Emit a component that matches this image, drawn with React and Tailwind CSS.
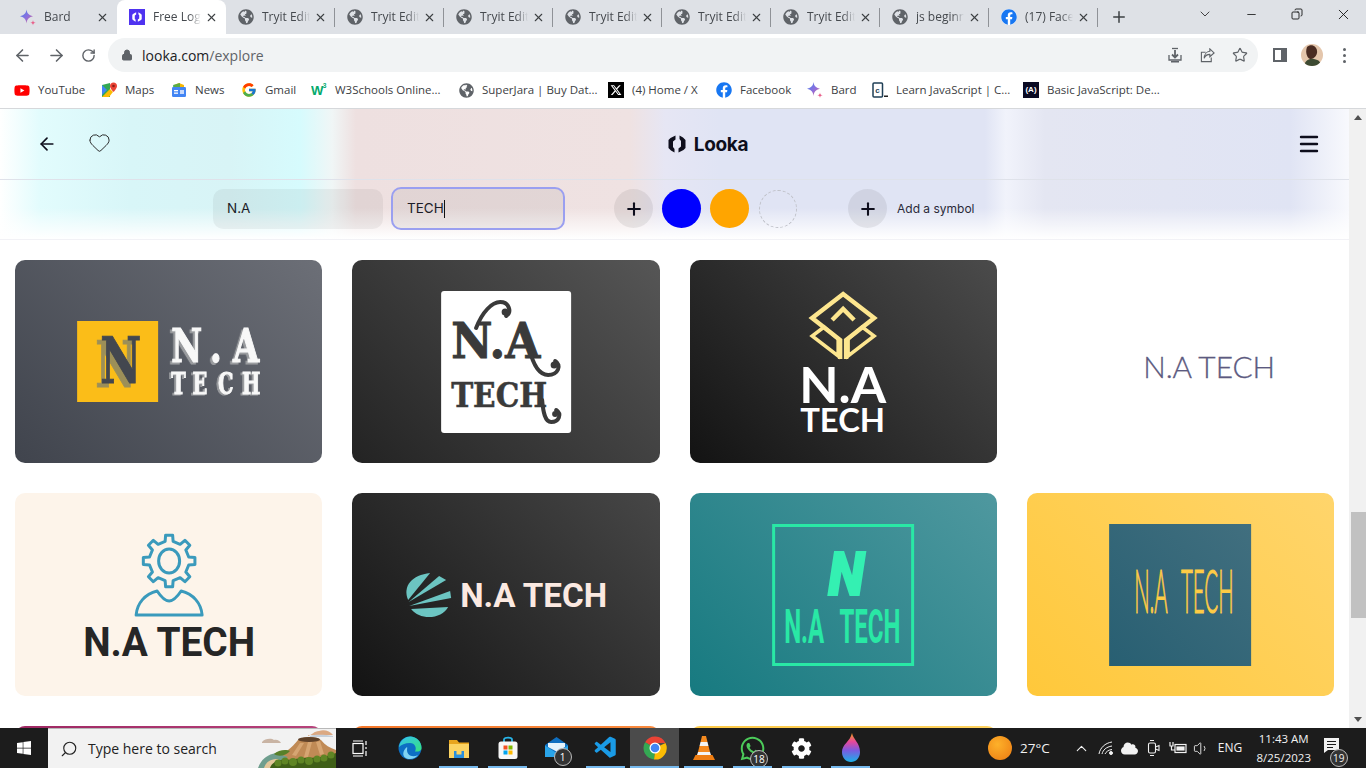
import React from 'react';
import { FaGlobeAmericas, FaFacebook, FaYoutube, FaWindows, FaWhatsapp, FaCog, FaCloud } from 'react-icons/fa';
import { FcGoogle } from 'react-icons/fc';
import { FaXTwitter } from 'react-icons/fa6';
import { VscVscode } from 'react-icons/vsc';
import {
  ArrowLeft, ArrowRight, RotateCw, Lock, Star, Heart, Menu, Plus, X, ChevronDown,
  Minus, Copy, ChevronUp, Search, Volume1,
} from 'lucide-react';

// Iconos de pestañas y marcadores
const BardIcon = ({ size = 17, id = 'bardGrad' }) => (
  <svg width={size} height={size} viewBox="0 0 16 16">
    <defs>
      <linearGradient id={id} x1="0" y1="0" x2="1" y2="1">
        <stop offset="0" stopColor="#3f83f0" />
        <stop offset="0.55" stopColor="#8f6fdc" />
        <stop offset="1" stopColor="#e0607a" />
      </linearGradient>
    </defs>
    <path d="M6.500 0C7 3.800 8.500 5.500 13 6.800C8.500 8 7 9.800 6.500 14C6 9.800 4.500 8 0 6.800C4.500 5.500 6 3.800 6.500 0Z" fill={`url(#${id})`} />
    <path d="M13 10.500C13.200 12.300 13.900 13 15.800 13.300C13.900 13.600 13.200 14.300 13 16C12.800 14.300 12.100 13.600 10.200 13.300C12.100 13 12.800 12.300 13 10.500Z" fill="#e8608a" />
  </svg>
);

const LookaFavicon = () => (
  <div className="w-4 h-4 bg-[#4f33f0] flex items-center justify-center">
    <svg width="10" height="10" viewBox="0 0 18 18" fill="#fff">
      <path d="M7.500 0.500 L2.500 3 L0.500 5 V13 L3 15.500 L6.500 17.500 V14 L5 12 V6.500 L7.500 4.500Z" />
      <path d="M10.500 17.500 L15.500 15 L17.500 13 V5 L15 2.500 L11.500 0.500 V4 L13 6 V11.500 L10.500 13.500Z" />
    </svg>
  </div>
);

const Globe = ({ size = 16 }) => <FaGlobeAmericas size={size} className="text-[#5f6368]" />;

const Fb = ({ size = 16 }) => (
  <span className="inline-flex rounded-full bg-white">
    <FaFacebook size={size} className="text-[#1877f2]" />
  </span>
);

const MapsIcon = () => (
  <svg width="16" height="16" viewBox="0 0 16 16">
    <path d="M1 3 L9 1 V15 L1 15Z" fill="#34a853" />
    <path d="M1 15 L9 7 L12 10 L8 15Z" fill="#fbbc04" />
    <path d="M1 3 L6 8 L1 13Z" fill="#4285f4" />
    <path d="M12.500 0.500C10.500 0.500 9 2 9 4C9 6.500 12.500 10 12.500 10C12.500 10 16 6.500 16 4C16 2 14.500 0.500 12.500 0.500Z" fill="#ea4335" />
    <circle cx="12.500" cy="4" r="1.300" fill="#8c1d18" />
  </svg>
);

const NewsIcon = () => (
  <svg width="16" height="16" viewBox="0 0 16 16">
    <path d="M3 3 L8 1 L13 3 V6 H3Z" fill="#f6b704" />
    <path d="M2 3 L9 1 V5 H2Z" fill="#34a853" opacity="0.8" />
    <rect x="1" y="5" width="14" height="10" rx="1.200" fill="#4285f4" />
    <rect x="3" y="8" width="4" height="1.300" fill="#fff" />
    <rect x="3" y="10.500" width="4" height="1.300" fill="#fff" />
    <rect x="9" y="8" width="4" height="4" fill="#c5d8fb" />
  </svg>
);

const W3Icon = () => (
  <svg width="17" height="16" viewBox="0 0 17 16">
    <text x="0" y="13" fontSize="14" fontWeight="900" fill="#04aa6d" className="font-['Liberation_Sans']">W</text>
    <text x="12.500" y="6" fontSize="7" fontWeight="700" fill="#04aa6d" className="font-['Liberation_Sans']">3</text>
  </svg>
);

const CodecademyIcon = () => (
  <svg width="16" height="16" viewBox="0 0 16 16">
    <rect x="1" y="1" width="9.500" height="14" rx="1" fill="none" stroke="#1f3f56" strokeWidth="1.500" />
    <text x="3.200" y="11" fontSize="8" fontWeight="700" fill="#1f3f56" className="font-['Liberation_Sans']">c</text>
    <rect x="12" y="13.500" width="4" height="1.500" fill="#222" />
  </svg>
);

const FccIcon = () => (
  <div className="w-4 h-4 bg-[#0a0a23] flex items-center justify-center text-white text-[8px] font-bold font-['Liberation_Sans'] leading-none">(A)</div>
);

const tabs = [
  { icon: <BardIcon />, title: 'Bard', sep: false },
  { icon: <LookaFavicon />, title: 'Free Logo Maker', active: true, sep: false },
  { icon: <Globe />, title: 'Tryit Editor', sep: true },
  { icon: <Globe />, title: 'Tryit Editor', sep: true },
  { icon: <Globe />, title: 'Tryit Editor', sep: true },
  { icon: <Globe />, title: 'Tryit Editor', sep: true },
  { icon: <Globe />, title: 'Tryit Editor', sep: true },
  { icon: <Globe />, title: 'Tryit Editor', sep: true },
  { icon: <Globe />, title: 'js beginner', sep: true },
  { icon: <Fb />, title: '(17) Facebook', sep: true },
];

const bookmarks = [
  { icon: <FaYoutube size={17} className="text-[#f00]" />, label: 'YouTube', width: 'w-[87px]' },
  { icon: <MapsIcon />, label: 'Maps', width: 'w-[70px]' },
  { icon: <NewsIcon />, label: 'News', width: 'w-[70px]' },
  { icon: <FcGoogle size={16} />, label: 'Gmail', width: 'w-[70px]' },
  { icon: <W3Icon />, label: 'W3Schools Online...', width: 'w-[147px]' },
  { icon: <Globe size={15} />, label: 'SuperJara | Buy Dat...', width: 'w-[150px]' },
  { icon: <div className="w-4 h-4 bg-black flex items-center justify-center"><FaXTwitter size={12} className="text-white" /></div>, label: '(4) Home / X', width: 'w-[108px]' },
  { icon: <Fb />, label: 'Facebook', width: 'w-[91px]' },
  { icon: <BardIcon size={16} id="bardGradBookmark" />, label: 'Bard', width: 'w-[65px]' },
  { icon: <CodecademyIcon />, label: 'Learn JavaScript | C...', width: 'w-[151px]' },
  { icon: <FccIcon />, label: 'Basic JavaScript: De...', width: 'w-[150px]' },
];

function gearPath(cx, cy, outer, inner, teeth) {
  const pts = [];
  const step = (Math.PI * 2) / teeth;
  for (let i = 0; i < teeth; i++) {
    const a = i * step - Math.PI / 2;
    const w = step * 0.17;
    const at = (r, ang) => `${(cx + r * Math.cos(ang)).toFixed(1)} ${(cy + r * Math.sin(ang)).toFixed(1)}`;
    pts.push(at(inner, a - w * 1.5), at(outer, a - w), at(outer, a + w), at(inner, a + w * 1.5));
  }
  return `M${pts.join(' L')} Z`;
}

// Logos de las tarjetas, en coordenadas de la tarjeta (307x203)
const LogoOne = () => (
  <svg viewBox="0 0 307 203" className="w-full h-full">
    <rect x="62" y="61" width="81" height="81" fill="#fbbd18" />
    <text x="85" y="123" fontSize="64" fontWeight="700" textLength="41" lengthAdjust="spacingAndGlyphs" fill="#43474f" stroke="#43474f" strokeWidth="1" className="font-['DejaVu_Serif'] [filter:drop-shadow(-5px_4px_0_#9c8f58)]">N</text>
    <text transform="translate(156 102) scale(0.72 1)" x="0 54 86" fontSize="47" fontWeight="700" fill="#f8f8f8" stroke="#f8f8f8" strokeWidth="1.200" className="font-['DejaVu_Serif'] [filter:drop-shadow(-3px_2px_0_#9a9c9f)]">N.A</text>
    <text transform="translate(156 134) scale(0.65 1)" x="0 33 72 109" fontSize="30" fontWeight="700" fill="#f8f8f8" stroke="#f8f8f8" strokeWidth="1" className="font-['DejaVu_Serif'] [filter:drop-shadow(-3px_1px_0_#9a9c9f)]">TECH</text>
  </svg>
);

const LogoTwo = () => (
  <svg viewBox="0 0 307 203" className="w-full h-full">
    <rect x="89" y="31" width="130" height="142" rx="3" fill="#fff" />
    <text x="99" y="98" fontSize="48" fontWeight="700" textLength="89" lengthAdjust="spacingAndGlyphs" fill="#3a3a3a" stroke="#3a3a3a" strokeWidth="1" className="font-['DejaVu_Serif']">N.A</text>
    <text x="99" y="147" fontSize="34" fontWeight="700" textLength="96" lengthAdjust="spacingAndGlyphs" fill="#3a3a3a" stroke="#3a3a3a" strokeWidth="0.600" className="font-['DejaVu_Serif']">TECH</text>
    <g fill="none" stroke="#3a3a3a" strokeWidth="4" strokeLinecap="round">
      <path d="M124 68C130 52 140 42 148 42C157 42 160 52 154 56" />
      <path d="M177 88C181 105 187 115 196 115C206 115 210 105 203 101" />
      <path d="M190 140C191 152 193 162 199 162C207 162 210 154 204 150" />
    </g>
    <circle cx="153" cy="52" r="3.500" fill="#3a3a3a" />
    <circle cx="202" cy="105" r="3.500" fill="#3a3a3a" />
    <circle cx="203" cy="154" r="3" fill="#3a3a3a" />
  </svg>
);

const LogoThree = () => (
  <svg viewBox="0 0 307 203" className="w-full h-full">
    <g fill="none" stroke="#fde68f" strokeWidth="4.500" strokeLinejoin="miter">
      <path d="M150 99 V80 L122 58 L153 34 L184 58 L156 80 V99" />
      <path d="M142 60 L153 49 L164 60" strokeWidth="4.500" />
      <path d="M134 67 L122 76 L148 96 V79 Z" strokeWidth="3.500" />
      <path d="M172 67 L184 76 L158 96 V79 Z" strokeWidth="3.500" />
    </g>
    <text x="109" y="143" fontSize="50" fontWeight="700" textLength="87" lengthAdjust="spacingAndGlyphs" fill="#fff" className="font-['Lato']">N.A</text>
    <text x="110" y="172" fontSize="32" fontWeight="700" textLength="85" lengthAdjust="spacingAndGlyphs" fill="#fff" className="font-['Lato']">TECH</text>
  </svg>
);

const LogoFour = () => (
  <svg viewBox="0 0 307 203" className="w-full h-full">
    <text x="116" y="118" fontSize="29" fontWeight="300" textLength="132" lengthAdjust="spacingAndGlyphs" fill="#5c5a80" stroke="#5c5a80" strokeWidth="0.300" className="font-['Lato']">N.A TECH</text>
  </svg>
);

const LogoFive = () => (
  <svg viewBox="0 0 307 203" className="w-full h-full">
    <g fill="none" stroke="#3a9abc" strokeWidth="3" strokeLinejoin="round">
      <path d={gearPath(154, 68, 26, 20, 8)} />
      <ellipse cx="154" cy="68" rx="10.500" ry="12" />
      <path d="M121 122 H187 C186 110 178 101 166 98 C162 104 158 108 154 108 C150 108 146 104 142 98 C130 101 122 110 121 122 Z" />
    </g>
    <text x="68" y="163" fontSize="41" fontWeight="700" textLength="172" lengthAdjust="spacingAndGlyphs" fill="#262626" className="font-['Roboto']">N.A TECH</text>
  </svg>
);

const LogoSix = () => (
  <svg viewBox="0 0 307 203" className="w-full h-full">
    <g fill="#6cc5c2">
      <path d="M78 80 L56 107 C50 93 60 82 78 80Z" />
      <path d="M87 83 L94 87 L56.500 109Z" />
      <path d="M98 98 L99 105 L57 113Z" />
      <path d="M59 116 L96 114 C90 126 68 128 59 116Z" />
    </g>
    <text x="108" y="114" fontSize="34" fontWeight="700" textLength="147" lengthAdjust="spacingAndGlyphs" fill="#fbe9e1" className="font-['Roboto']">N.A TECH</text>
  </svg>
);

const LogoSeven = () => (
  <svg viewBox="0 0 307 203" className="w-full h-full">
    <rect x="83.500" y="32.500" width="139" height="139" fill="none" stroke="#29e8a5" strokeWidth="3" />
    <text x="138" y="102" fontSize="60" fontWeight="900" fontStyle="italic" textLength="36" lengthAdjust="spacingAndGlyphs" fill="#34f0b2" stroke="#34f0b2" strokeWidth="2" className="font-['Roboto']">N</text>
    <text transform="translate(94 150) scale(0.5 1)" dx="0 0 0 0 20" fontSize="48" fontWeight="700" fill="#29e8a5" className="font-['Roboto']">N.A TECH</text>
  </svg>
);

const LogoEight = () => (
  <svg viewBox="0 0 307 203" className="w-full h-full">
    <defs>
      <linearGradient id="tealRect" x1="0" y1="1" x2="1" y2="0">
        <stop offset="0" stopColor="#285f72" />
        <stop offset="1" stopColor="#416f7f" />
      </linearGradient>
    </defs>
    <rect x="82" y="31" width="142" height="142" fill="url(#tealRect)" />
    <text transform="translate(107 120) scale(0.33 1)" dx="0 0 0 0 27" fontSize="62" fontWeight="300" fill="#fecb45" stroke="#fecb45" strokeWidth="1.200" className="font-['Lato']">N.A TECH</text>
  </svg>
);

const cards = [
  { bg: 'bg-[linear-gradient(45deg,#40444d,#6c6f77)]', logo: <LogoOne /> },
  { bg: 'bg-[linear-gradient(45deg,#232323,#565656)]', logo: <LogoTwo /> },
  { bg: 'bg-[linear-gradient(45deg,#131313,#4b4b4b)]', logo: <LogoThree /> },
  { bg: 'bg-white', logo: <LogoFour /> },
  { bg: 'bg-[#fdf4ea]', logo: <LogoFive /> },
  { bg: 'bg-[linear-gradient(45deg,#131313,#474747)]', logo: <LogoSix /> },
  { bg: 'bg-[linear-gradient(45deg,#177a80,#4f989f)]', logo: <LogoSeven /> },
  { bg: 'bg-[linear-gradient(45deg,#ffc83a,#ffd56c)]', logo: <LogoEight /> },
  { bg: 'bg-[linear-gradient(45deg,#8c1450,#b8437c)]', logo: null },
  { bg: 'bg-[linear-gradient(45deg,#f06a1c,#f98a3e)]', logo: null },
  { bg: 'bg-[linear-gradient(45deg,#fdc437,#fed25f)]', logo: null },
  { bg: 'bg-white', logo: null },
];

const TabStrip = () => (
  <div className="h-[34px] bg-[#dee1e6] flex pl-2 shrink-0 font-['Open_Sans',sans-serif]">
    {tabs.map((t, i) => (
      <div
        key={i}
        className={`w-[109px] h-full flex items-center pl-[12px] relative ${t.active ? 'bg-white rounded-t-lg' : ''}`}
      >
        <span className="w-4 h-4 flex items-center justify-center shrink-0">{t.icon}</span>
        <span className="ml-2 w-[48px] overflow-hidden whitespace-nowrap text-[12px] text-[#45494e] [mask-image:linear-gradient(to_right,black_75%,transparent)]">{t.title}</span>
        <X size={13} strokeWidth={2} className="ml-[4px] text-[#3c4043] shrink-0" />
        {t.sep && <span className="absolute right-0 top-[8px] h-[19px] w-px bg-[#8f9297]" />}
      </div>
    ))}
    <div className="w-[38px] flex items-center justify-center ml-[2px]">
      <Plus size={18} strokeWidth={2} className="text-[#3c4043]" />
    </div>
    <div className="flex-1 flex items-start justify-end">
      <div className="w-[46px] h-[28px] flex items-center justify-center"><ChevronDown size={16} strokeWidth={1.250} className="text-[#222]" /></div>
      <div className="w-[46px] h-[28px] flex items-center justify-center"><Minus size={13} strokeWidth={1.500} className="text-[#111]" /></div>
      <div className="w-[46px] h-[28px] flex items-center justify-center"><Copy size={12} strokeWidth={1.750} className="text-[#111] -scale-x-100" /></div>
      <div className="w-[46px] h-[28px] flex items-center justify-center"><X size={17} strokeWidth={1.250} className="text-[#111]" /></div>
    </div>
  </div>
);

const Toolbar = () => (
  <div className="h-[38px] bg-white flex items-start shrink-0 font-['Open_Sans',sans-serif]">
    <div className="w-[108px] h-full flex items-center pl-[13px] gap-[15px] text-[#5f6368] pt-[4px]">
      <ArrowLeft size={19} strokeWidth={2} />
      <ArrowRight size={19} strokeWidth={2} />
      <RotateCw size={15} strokeWidth={2.250} />
    </div>
    <div className="w-[1150px] h-[34px] mt-[4px] bg-[#f1f3f4] rounded-full flex items-center pl-[13px] pr-[10px]">
      <Lock size={12} fill="#5f6368" className="text-[#5f6368]" />
      <span className="ml-[9px] text-[14px] text-[#202124]">looka.com<span className="text-[#5f6368]">/explore</span></span>
      <div className="ml-auto flex items-center gap-[17px] text-[#5f6368]">
        <svg width="16" height="16" viewBox="0 0 16 16" fill="none" stroke="currentColor" strokeWidth="1.300">
          <path d="M2 8 V13 H14 V8" /><path d="M5 1.500 H11" /><path d="M8 3 V10 M5 7.500 L8 10.500 L11 7.500" strokeWidth="1.800" /><rect x="4" y="14" width="8" height="1.500" fill="currentColor" stroke="none" />
        </svg>
        <svg width="15" height="15" viewBox="0 0 16 16" fill="none" stroke="currentColor" strokeWidth="1.200">
          <path d="M6 4.500 H1.500 V14.500 H12 V10" />
          <path d="M10.500 1 L15 5.200 L10.500 9.200 V6.800 C7.500 6.800 5.500 8 4.500 11 C4.500 7 7 3.800 10.500 3.500Z" />
        </svg>
        <Star size={16} strokeWidth={1.750} />
      </div>
    </div>
    <div className="flex-1 h-full flex items-center pt-[4px] pl-[15px] text-[#5f6368]">
      <div className="w-[14px] h-[14px] border-2 border-[#5f6368] border-r-[6px]" />
      <svg width="22" height="22" viewBox="0 0 22 22" className="ml-[14px]">
        <clipPath id="avatarClip"><ellipse cx="11" cy="11" rx="11" ry="11" /></clipPath>
        <g clipPath="url(#avatarClip)">
          <rect width="22" height="22" fill="#e4c6ac" />
          <path d="M6 3 C10 -1 17 2 16 9 C15 13 12 15 9 15 C6 14 4 8 6 3Z" fill="#4a2c22" />
          <path d="M3 22 C4 16 9 14 13 15 C18 16 20 18 20 22Z" fill="#3d4a32" />
        </g>
      </svg>
      <div className="ml-[20px] flex flex-col gap-[3px]">
        <span className="w-[3px] h-[3px] rounded-full bg-[#5f6368]" />
        <span className="w-[3px] h-[3px] rounded-full bg-[#5f6368]" />
        <span className="w-[3px] h-[3px] rounded-full bg-[#5f6368]" />
      </div>
    </div>
  </div>
);

const BookmarksBar = () => (
  <div className="h-[37px] bg-white border-b border-[#d6d8db] flex items-center pl-[14px] shrink-0 font-['Open_Sans',sans-serif]">
    {bookmarks.map((b) => (
      <div key={b.label} className={`${b.width} flex items-center shrink-0`}>
        <span className="w-4 h-4 flex items-center justify-center shrink-0">{b.icon}</span>
        <span className="ml-2 text-[11.500px] text-[#3c4043] whitespace-nowrap">{b.label}</span>
      </div>
    ))}
  </div>
);

const LookaHeader = () => (
  <div className="h-[131px] shrink-0 flex flex-col border-b border-[#f2f2f6] font-['Inter',sans-serif] bg-[linear-gradient(to_bottom,transparent_76%,#ffffff_100%),linear-gradient(to_right,#ffffff_0,#e2fcfd_40px,#d8f6f8_130px,#d8f4f6_230px,#d6fbfd_300px,#f0f6f6_332px,#eee0e0_356px,#efe2e2_630px,#e6e6f4_665px,#e0e4f4_720px,#e0e4f4_985px,#f1f3fb_1006px,#e4e6f2_1045px,#e0e4f4_1290px,#f8f9fd_1349px)]">
    <div className="h-[71px] shrink-0 border-b border-[#dfe2ea] grid grid-cols-3 items-center px-[30px]">
      <div className="flex items-center gap-[33px] text-[#0e0e1c]">
        <ArrowLeft size={20} strokeWidth={2} className="ml-[7px]" />
        <Heart size={23} strokeWidth={1} className="-mt-[3px] -ml-[2px] text-[#222]" />
      </div>
      <div className="flex items-center justify-center gap-[8px] pl-[67px]">
        <svg width="18" height="18" viewBox="0 0 18 18" fill="#0e0e1c">
          <path d="M7.500 0.500 L2.500 3 L0.500 5 V13 L3 15.500 L6.500 17.500 V14 L5 12 V6.500 L7.500 4.500Z" />
          <path d="M10.500 17.500 L15.500 15 L17.500 13 V5 L15 2.500 L11.500 0.500 V4 L13 6 V11.500 L10.500 13.500Z" />
        </svg>
        <span className="text-[19px] font-bold tracking-[-0.3px] text-[#0e0e1c] leading-none">Looka</span>
      </div>
      <div className="flex justify-end -mr-[2px]">
        <Menu size={24} strokeWidth={2.400} className="text-[#0e0e1c]" />
      </div>
    </div>
    <div className="flex-1 flex items-center pl-[213px] pb-[2px]">
      <div className="w-[170px] h-[40px] rounded-[10px] bg-black/5 flex items-center pl-[14px] text-[13.500px] text-[#1c1c28]">N.A</div>
      <div className="w-[174px] h-[43px] ml-[8px] rounded-[10px] border-2 border-[#9a9ff0] bg-black/5 flex items-center pl-[14px] text-[13.500px] text-[#1c1c28]">
        TECH<span className="w-px h-[18px] bg-[#111]" />
      </div>
      <div className="w-[39px] h-[39px] ml-[49px] rounded-full bg-black/7 flex items-center justify-center"><Plus size={20} strokeWidth={2.500} className="text-[#0e0e1c]" /></div>
      <div className="w-[39px] h-[39px] ml-[9px] rounded-full bg-[#0000ff]" />
      <div className="w-[39px] h-[39px] ml-[9px] rounded-full bg-[#ffa500]" />
      <div className="w-[38px] h-[38px] ml-[10px] rounded-full border border-dashed border-[#bfc1c8]" />
      <div className="w-[39px] h-[39px] ml-[51px] rounded-full bg-black/7 flex items-center justify-center"><Plus size={20} strokeWidth={2.500} className="text-[#0e0e1c]" /></div>
      <span className="ml-[10px] text-[12px] text-[#2a2a38]">Add a symbol</span>
    </div>
  </div>
);

const Scrollbar = () => (
  <div className="w-[17px] bg-[#f1f1f1] flex flex-col items-center justify-between shrink-0 relative">
    <span className="mt-[6px] w-0 h-0 border-x-[4px] border-x-transparent border-b-[5px] border-b-[#505050]" />
    <div className="absolute left-[2px] right-0 top-[403px] h-[106px] bg-[#c1c1c1]" />
    <span className="mb-[6px] w-0 h-0 border-x-[4px] border-x-transparent border-t-[5px] border-t-[#505050]" />
  </div>
);

// Iconos de la barra de tareas
const EdgeIcon = () => (
  <svg width="24" height="24" viewBox="0 0 24 24">
    <defs>
      <linearGradient id="edgeA" x1="0" y1="0" x2="1" y2="1"><stop offset="0" stopColor="#35c1f1" /><stop offset="1" stopColor="#36e27c" /></linearGradient>
    </defs>
    <circle cx="12" cy="12" r="11.500" fill="#0d6fc4" />
    <path d="M1 11 C2 3 9 0 13 0.500 C19 1 23.500 6 23.500 12 C23.500 15 20 16 17 15.500 C19 12 17 7 12 7 C7 7 3 9 1 11Z" fill="url(#edgeA)" />
    <path d="M9 14 C9 19 14 22 20 19 C17 23 11 24.500 7 21.500 C4 19 5 14 9 11 C9.500 12 9 13 9 14Z" fill="#7fd4f5" />
  </svg>
);

const FolderIcon = () => (
  <svg width="24" height="24" viewBox="0 0 24 24">
    <path d="M2 4 H10 L12 6.500 H22 V21 H2Z" fill="#e8a51d" />
    <rect x="2" y="8" width="20" height="14" fill="#fcd462" />
    <rect x="7" y="15" width="10" height="7" fill="#2a8fdc" />
    <rect x="9.500" y="15" width="5" height="3.500" fill="#fcd462" />
  </svg>
);

const StoreIcon = () => (
  <svg width="24" height="24" viewBox="0 0 24 24">
    <path d="M8 6 V3.500 C8 1 16 1 16 3.500 V6" fill="none" stroke="#28b5e8" strokeWidth="1.800" />
    <rect x="2.500" y="5.500" width="19" height="17.500" rx="2.500" fill="#f7f7f7" />
    <rect x="7.500" y="9.500" width="4" height="4" fill="#f25022" />
    <rect x="12.500" y="9.500" width="4" height="4" fill="#7fba00" />
    <rect x="7.500" y="14.500" width="4" height="4" fill="#00a4ef" />
    <rect x="12.500" y="14.500" width="4" height="4" fill="#ffb900" />
  </svg>
);

const MailIcon = () => (
  <svg width="26" height="24" viewBox="0 0 26 24">
    <path d="M1 9 L12.500 1 L24 9 V21 H1Z" fill="#0f6fc0" />
    <path d="M1 9.500 L12.500 17 L24 9.500 V21 H1Z" fill="#2aa5ea" />
    <path d="M4 7 H21 V11 L12.500 15.500 L4 11Z" fill="#e4f3fc" />
  </svg>
);

const ChromeIcon = () => (
  <svg width="24" height="24" viewBox="0 0 24 24">
    <path d="M12 12 L2.100 6.200 A11.500 11.500 0 0 1 22.500 7 H12Z" fill="#ea4335" />
    <path d="M12 12 L22.500 7 A11.500 11.500 0 0 1 11 23.500Z" fill="#fbbc04" />
    <path d="M12 12 L11 23.500 A11.500 11.500 0 0 1 2.100 6.200Z" fill="#34a853" />
    <circle cx="12" cy="12" r="5.500" fill="#fff" />
    <circle cx="12" cy="12" r="4.300" fill="#4285f4" />
  </svg>
);

const VlcIcon = () => (
  <svg width="24" height="26" viewBox="0 0 24 26">
    <path d="M10 1 H14 L15.500 7 H8.500Z" fill="#f58a1f" />
    <path d="M8.500 7 H15.500 L16.500 11 H7.500Z" fill="#f3f3f3" />
    <path d="M7.500 11 H16.500 L18 17 H6Z" fill="#f58a1f" />
    <path d="M6 17 H18 L19 20 H5Z" fill="#f3f3f3" />
    <path d="M3.500 20 H20.500 L23 25 H1Z" fill="#ef7d12" />
  </svg>
);

const DropIcon = () => (
  <svg width="20" height="30" viewBox="0 0 20 30">
    <defs>
      <linearGradient id="dropG" x1="0" y1="0" x2="0" y2="1">
        <stop offset="0" stopColor="#f7a11b" />
        <stop offset="0.3" stopColor="#e6479a" />
        <stop offset="0.6" stopColor="#7a5be0" />
        <stop offset="1" stopColor="#1ab2e8" />
      </linearGradient>
    </defs>
    <path d="M11 0 C12 6 19 10 19 19 C19 25 15 29 10 29 C5 29 1 25 1 19 C1 11 9 9 11 0Z" fill="url(#dropG)" />
  </svg>
);

const Badge = ({ children }) => (
  <span className="absolute right-[-2px] bottom-[-6px] w-[18px] h-[18px] rounded-full bg-[#333] border border-[#bbb] text-white text-[10px] flex items-center justify-center leading-none">{children}</span>
);

const taskIcons = [
  { icon: <svg width="17" height="17" viewBox="0 0 17 17" fill="none" stroke="#fff" strokeWidth="1.200"><rect x="1" y="3.500" width="10" height="10" /><path d="M1 1 H11 M1 16 H11 M14 1 V5 M14 7 V9 M14 11 V16" /></svg> },
  { icon: <EdgeIcon /> },
  { icon: <FolderIcon />, running: true },
  { icon: <StoreIcon />, running: true },
  { icon: <div className="relative"><MailIcon /><Badge>1</Badge></div> },
  { icon: <VscVscode size={26} className="text-[#1a9be6]" />, running: true },
  { icon: <ChromeIcon />, running: true, active: true },
  { icon: <VlcIcon />, running: true },
  { icon: <div className="relative"><FaWhatsapp size={27} className="text-[#4ccb5a]" /><Badge>18</Badge></div>, running: true },
  { icon: <FaCog size={21} className="text-white" />, running: true },
  { icon: <DropIcon />, running: true },
];

const VolcanoArt = () => (
  <svg width="78" height="39" viewBox="0 0 78 39" className="shrink-0">
    <path d="M4 13 C7 9 14 9 16 11 C19 10 22 12 23 14 H4Z" fill="#c9b4a4" />
    <path d="M50 7 C54 6 56 2 61 2 C66 0 72 2 75 6 H50Z" fill="#dba983" />
    <path d="M52 7 C58 5 68 6 75 7 V8 H52Z" fill="#c5cfda" />
    <path d="M18 30 C26 24 34 19 40 11 C46 7 58 7 63 11 C67 16 72 19 78 21 V39 H18Z" fill="#c08a55" />
    <path d="M50 13 L46 28 L50 28 L54 13Z M58 13 L62 26 L66 25 L62 12Z M42 14 L34 26 L38 27 L46 14Z" fill="#d6a572" />
    <ellipse cx="51" cy="10.500" rx="11" ry="2.500" fill="#5f4129" />
    <path d="M0 39 C3 31 8 26 18 24 L30 28 L12 39Z" fill="#6f9e8e" />
    <path d="M6 39 C8 33 12 30 20 30 L26 39Z" fill="#e3c79a" />
    <path d="M12 39 C14 32 24 29 34 31 C46 27 62 31 78 24 V39Z" fill="#3f5f17" />
    <path d="M16 25 C20 21 28 20 32 22 C28 27 20 28 16 25Z" fill="#58802a" />
    <g fill="#5f8524">
      <circle cx="20" cy="34" r="3.500" /><circle cx="27" cy="32" r="3.500" /><circle cx="35" cy="33" r="4" /><circle cx="43" cy="31" r="3.500" /><circle cx="51" cy="32" r="4" /><circle cx="59" cy="30" r="3.500" /><circle cx="66" cy="29" r="3.500" /><circle cx="73" cy="26" r="3.500" />
    </g>
  </svg>
);

const Taskbar = () => (
  <div className="h-[40px] bg-[#1c1c1c] flex items-stretch shrink-0 text-white font-['Open_Sans',sans-serif]">
    <div className="w-[48px] flex items-center justify-center">
      <FaWindows size={16} />
    </div>
    <div className="w-[288px] bg-[#f2f2f2] border-t border-[#b8b8b8] flex items-center overflow-hidden">
      <Search size={18} strokeWidth={1.500} className="ml-[12px] text-[#222] -scale-x-100" />
      <span className="ml-[10px] text-[14px] text-[#222] whitespace-nowrap">Type here to search</span>
      <div className="ml-auto"><VolcanoArt /></div>
    </div>
    <div className="flex">
      {taskIcons.map((t, i) => (
        <div key={i} className={`w-[49px] relative flex items-center justify-center ${t.active ? 'bg-[#4b4b4b]' : ''}`}>
          {t.icon}
          {t.running && (
            <span className={`absolute bottom-0 h-[2px] bg-[#76b9ed] ${t.active ? 'inset-x-0' : 'left-[5px] right-[5px]'}`} />
          )}
        </div>
      ))}
    </div>
    <div className="flex-1 flex items-center pl-[114px] text-[13.500px] text-[#f2f2f2]">
      <span className="w-[24px] h-[24px] rounded-full bg-[radial-gradient(circle_at_40%_35%,#fdb12a,#ec7a12)] -ml-[1px]" />
      <span className="ml-[8px]">27°C</span>
      <ChevronUp size={17} strokeWidth={1.500} className="ml-[23px]" />
      <svg width="16" height="16" viewBox="0 0 16 16" fill="none" stroke="#f2f2f2" strokeWidth="1" className="ml-[8px]">
        <path d="M1 14 C2 8 7 3 14 2 M4 14 C5 10 8 7 14 6 M7 14 C8 12 10 10 14 9.500" /><circle cx="13" cy="13" r="1.500" fill="#f2f2f2" />
      </svg>
      <FaCloud size={17} className="ml-[7px]" />
      <svg width="14" height="18" viewBox="0 0 14 18" fill="none" stroke="#f2f2f2" strokeWidth="1.100" className="ml-[9px]">
        <rect x="1.500" y="4" width="7" height="10" rx="1.500" /><path d="M8.500 8 L12 6.500 V11.500 L8.500 10" /><path d="M3 1.500 H7 M3 16.500 H7" />
      </svg>
      <svg width="18" height="14" viewBox="0 0 18 14" fill="none" stroke="#f2f2f2" strokeWidth="1.200" className="ml-[8px]">
        <rect x="6" y="3.500" width="11" height="8" /><rect x="8" y="6" width="7" height="3" fill="#f2f2f2" /><path d="M1 1 V5 M4 1 V5 M0.500 5 H4.500 M2.500 5 V9 H6" />
      </svg>
      <Volume1 size={17} strokeWidth={1.250} className="ml-[6px]" />
      <span className="ml-[8px] text-[12px] w-[30px]">ENG</span>
      <div className="ml-[3px] w-[66px] flex flex-col items-center text-[11.500px] leading-[19px]">
        <span>11:43 AM</span>
        <span>8/25/2023</span>
      </div>
      <div className="relative ml-[6px]">
        <svg width="17" height="17" viewBox="0 0 17 17" fill="#f2f2f2" className="-mt-[6px]">
          <path d="M1 1 H16 V13 H5 L1 16Z" /><path d="M4 4.500 H13 M4 7.500 H13 M4 10.500 H10" stroke="#1c1c1c" strokeWidth="1" />
        </svg>
        <span className="absolute left-[7px] top-[6px] w-[18px] h-[18px] rounded-full bg-[#333] border border-[#bbb] text-[10px] flex items-center justify-center leading-none">19</span>
      </div>
    </div>
  </div>
);

const App = () => (
  <div className="w-[1366px] h-[768px] overflow-hidden flex flex-col bg-white">
    <TabStrip />
    <Toolbar />
    <BookmarksBar />
    <div className="flex-1 min-h-0 flex">
      <div className="flex-1 min-w-0 flex flex-col overflow-hidden">
        <LookaHeader />
        <div className="grid grid-cols-4 gap-x-[30px] gap-y-[30px] px-[15px] pt-[20px]">
          {cards.map((c, i) => (
            <div key={i} className={`h-[203px] rounded-[10px] overflow-hidden ${c.bg}`}>{c.logo}</div>
          ))}
        </div>
      </div>
      <Scrollbar />
    </div>
    <Taskbar />
  </div>
);

export default App;
